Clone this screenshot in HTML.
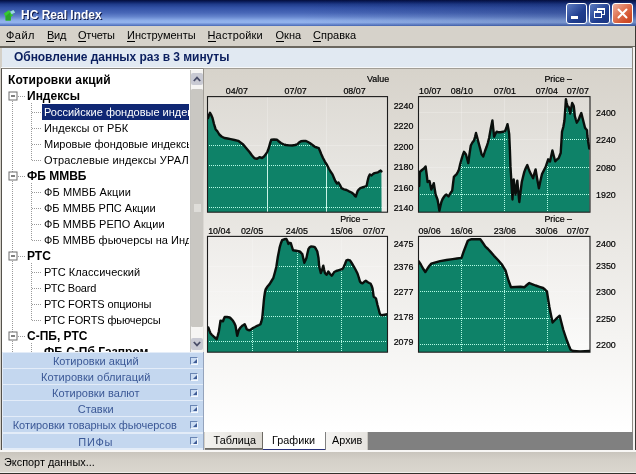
<!DOCTYPE html>
<html><head><meta charset="utf-8"><title>HC Real Index</title>
<style>
html,body{margin:0;padding:0}
body{will-change:transform;width:636px;height:474px;overflow:hidden;position:relative;background:#d4d0c8;font-family:"Liberation Sans",sans-serif;font-size:11px;color:#000}
div,span,i{position:absolute;box-sizing:border-box;white-space:nowrap}
.title{left:0;top:0;width:636px;height:26px;background:linear-gradient(180deg,#040e3c 0%,#0c1f60 7%,#1f3b8a 16%,#3352a6 30%,#4968b8 50%,#6686ce 65%,#8cace8 78%,#94b4ee 86%,#6a8ad0 94%,#4868b4 100%)}
.title .shade{left:300px;top:0;width:336px;height:26px;background:linear-gradient(90deg,rgba(8,20,70,0) 0%,rgba(8,20,70,.25) 100%)}
.title .t{left:21px;top:7.5px;font-size:12px;font-weight:bold;color:#fff;text-shadow:1px 1px 0 #0a1440;line-height:14px}
.menubar{left:0;top:26px;width:636px;height:21px;background:#d6d2ca}
.menubar span{top:3px;line-height:13px;font-size:11px;color:#000}
.menubar u{text-decoration:none;border-bottom:1px solid #000;padding-bottom:0}
.mline{left:0;top:46px;width:636px;height:2px;background:#6b675f}
.upd{left:2px;top:48px;width:631px;height:18.6px;background:#e1e9f2}
.updw{left:1px;top:66.6px;width:634px;height:1.6px;background:#f6f7f8}
.upd span{left:12px;top:2px;font-size:12px;font-weight:bold;color:#0a1e5e;line-height:14px;letter-spacing:-0.05px}
.leftp{left:1px;top:68.2px;width:202.5px;height:382px;background:#fff;border-left:1.6px solid #55524c;border-top:1.6px solid #86837d}
.tr{height:16px;line-height:16px;font-size:11px;color:#000}
.tr.b{font-weight:bold;font-size:12px}
.tr.sel{color:#fff}
.selbg{left:42px;width:147px;height:16px;background:#0f2773}
.treeclip{left:2px;top:70px;width:187px;height:282px;overflow:hidden;background:#fff}
.treeclip .in{left:-2px;top:-70px;width:190px;height:400px}
svg.tl{position:absolute;left:0px;top:70px}
.sb{left:189.6px;top:70px;width:13.4px;height:282px;background:#f6f5f3;border-left:1px solid #c4c3bf}
.sb .btn{left:0.8px;width:11.4px;height:12px;background:#c9cad3;border-radius:2px}
.sb .thumb{left:0.6px;top:19px;width:11.6px;height:237.5px;background:#c9c7c2;border-radius:1.5px}
.acc{left:3px;width:200px;height:14.6px;background:#c4d7ef}
.acc span{left:0;width:185.5px;letter-spacing:0.04px;text-align:center;top:1px;line-height:14.6px;font-size:11px;color:#3b5896}
.acc i{left:187px;top:3.5px;width:8px;height:8px;border:1px solid #f4f8fd;border-top-color:#6a86b4;border-left-color:#6a86b4;background:#cbdcf2}
.acc i:after{content:"";position:absolute;left:1.5px;top:1.5px;width:0;height:0;border-left:4.5px solid transparent;border-bottom:4.5px solid #3f5c96}
.accbg{left:2px;top:352px;width:202px;height:98px;background:#e3ecf8}
.split{left:203px;top:68.2px;width:1.2px;height:284px;background:linear-gradient(180deg,#96928b 0%,#a8a49e 12%,#d6d3ce 40%,#e8e6e2 100%)}
.split2{left:203px;top:352px;width:1px;height:98px;background:#94a3bc}
.panel{left:204.2px;top:68.2px;width:427.8px;height:364px;background:linear-gradient(180deg,#d7d3cb 0%,#ffffff 100%);border-top:1px solid #a29e96}
.tabs{left:205px;top:431.5px;width:428px;height:18.5px;background:#808080}
.tab{top:0;height:17.5px;background:linear-gradient(90deg,#f4f3f0,#dddad4);font-size:10.8px;line-height:16.5px;text-align:center;color:#000;border-right:1px solid #6d6a64;border-bottom:1px solid #6d6a64}
.tab.act{top:-2px;height:20px;background:#fff;line-height:21.5px;border-bottom:1.5px solid #27307a;border-right:none}
.redge{left:632px;top:47px;width:4px;height:405px;background:#f4f3f1;border-left:1px solid #8f8b84;border-right:1px solid #3a3834}
.redge2{left:635px;top:26px;width:1px;height:448px;background:#3a3834}
.status{left:0;top:450px;width:636px;height:24px;background:linear-gradient(180deg,#c9c5bd 0%,#d4d0c8 35%,#dbd7cf 100%);border-top:2px solid #f8f7f5;border-bottom:1.5px solid #33312c}
.status:after{content:"";position:absolute;left:0;right:0;bottom:0;height:1px;background:#f0efec}
.status span{left:4px;top:3.8px;font-size:10.9px;line-height:13px}
svg.charts{position:absolute;left:0;top:0}
.cb{top:3px;width:21px;height:21px;border:1px solid #fff;border-radius:3px}
</style></head><body>
<div class="title"><div class="shade"></div>
<svg style="position:absolute;left:3px;top:8.5px" width="13" height="12.5" viewBox="0 0 15 14" preserveAspectRatio="none"><path d="M1 5 L7 1 L8 3 L12 1 L14 4 L10 6 L12 7 L9 9 L9 13 L3 13 L3 9 Z" fill="#35c832"/><path d="M7 1 L8 3 L12 1 L14 4 L10 6" fill="#9fd0f0"/><path d="M3 8 L8 4 L9 9 L9 13 L3 13Z" fill="#2aa62a"/></svg>
<span class="t">HC Real Index</span>
<div class="cb" style="left:566px;background:linear-gradient(135deg,#5d7bc0,#1f3d8f 60%,#1a347f)"><div style="left:4px;top:12px;width:7px;height:3px;background:#fff"></div></div>
<div class="cb" style="left:589px;background:linear-gradient(135deg,#5d7bc0,#1f3d8f 60%,#1a347f)"><div style="left:7px;top:4px;width:8px;height:7px;border:1px solid #fff;border-top-width:2px"></div><div style="left:4px;top:7px;width:8px;height:7px;border:1px solid #fff;border-top-width:2px;background:#27449a"></div></div>
<div class="cb" style="left:612px;background:linear-gradient(135deg,#eeb0a0 0%,#e07858 40%,#d2502c 75%,#c84420 100%)"><svg style="position:absolute;left:4px;top:4px" width="11" height="11" viewBox="0 0 11 11"><path d="M1.5 1.5 L9.5 9.5 M9.5 1.5 L1.5 9.5" stroke="#fff" stroke-width="2" stroke-linecap="round"/></svg></div>
</div>
<div class="menubar">
<span style="left:6px;letter-spacing:0.45px"><u>Ф</u>айл</span>
<span style="left:47px;letter-spacing:-0.3px"><u>В</u>ид</span>
<span style="left:78px;letter-spacing:-0.2px"><u>О</u>тчеты</span>
<span style="left:127px"><u>И</u>нструменты</span>
<span style="left:207.5px;letter-spacing:0.15px"><u>Н</u>астройки</span>
<span style="left:275.5px"><u>О</u>кна</span>
<span style="left:313px"><u>С</u>правка</span>
</div>
<div class="mline"></div>
<div class="upd"><span>Обновление данных раз в 3 минуты</span></div>
<div class="updw"></div><div class="redge"></div><div class="redge2"></div>
<div class="leftp"></div>
<div class="treeclip"><div class="in">
<div class="tr b" style="top:72px;left:8px;letter-spacing:0.1px">Котировки акций</div>
<div class="tr b" style="top:88px;left:27px">Индексы</div>
<div class="selbg" style="top:104px"></div>
<div class="tr sel" style="top:104px;left:44px">Российские фондовые индексы</div>
<div class="tr" style="top:120px;left:44px;letter-spacing:0.1px">Индексы от РБК</div>
<div class="tr" style="top:136px;left:44px">Мировые фондовые индексы</div>
<div class="tr" style="top:152px;left:44px;letter-spacing:0.15px">Отраслевые индексы УРАЛСИБ</div>
<div class="tr b" style="top:168px;left:27px">ФБ ММВБ</div>
<div class="tr" style="top:184px;left:44px;letter-spacing:0.13px">ФБ ММВБ Акции</div>
<div class="tr" style="top:200px;left:44px">ФБ ММВБ РПС Акции</div>
<div class="tr" style="top:216px;left:44px;letter-spacing:0.06px">ФБ ММВБ РЕПО Акции</div>
<div class="tr" style="top:232px;left:44px">ФБ ММВБ фьючерсы на Индексы</div>
<div class="tr b" style="top:248px;left:27px">РТС</div>
<div class="tr" style="top:264px;left:44px;letter-spacing:0.07px">РТС Классический</div>
<div class="tr" style="top:280px;left:44px;letter-spacing:-0.2px">РТС Board</div>
<div class="tr" style="top:296px;left:44px;letter-spacing:-0.12px">РТС FORTS опционы</div>
<div class="tr" style="top:312px;left:44px;letter-spacing:-0.13px">РТС FORTS фьючерсы</div>
<div class="tr b" style="top:328px;left:27px">С-ПБ, РТС</div>
<div class="tr b" style="top:344px;left:44px">ФБ С-Пб Газпром</div>
</div></div>
<svg class="tl" width="190" height="282" viewBox="0 70 190 282"><g stroke="#9a9a9a" stroke-width="1" stroke-dasharray="1 1" shape-rendering="crispEdges"><line x1="12.5" x2="12.5" y1="101" y2="352"/><line x1="18" x2="26" y1="96.5" y2="96.5"/><line x1="32" x2="42" y1="112.5" y2="112.5"/><line x1="32" x2="42" y1="128.5" y2="128.5"/><line x1="32" x2="42" y1="144.5" y2="144.5"/><line x1="32" x2="42" y1="160.5" y2="160.5"/><line x1="18" x2="26" y1="176.5" y2="176.5"/><line x1="32" x2="42" y1="192.5" y2="192.5"/><line x1="32" x2="42" y1="208.5" y2="208.5"/><line x1="32" x2="42" y1="224.5" y2="224.5"/><line x1="32" x2="42" y1="240.5" y2="240.5"/><line x1="18" x2="26" y1="256.5" y2="256.5"/><line x1="32" x2="42" y1="272.5" y2="272.5"/><line x1="32" x2="42" y1="288.5" y2="288.5"/><line x1="32" x2="42" y1="304.5" y2="304.5"/><line x1="32" x2="42" y1="320.5" y2="320.5"/><line x1="18" x2="26" y1="336.5" y2="336.5"/><line x1="32" x2="42" y1="352.5" y2="352.5"/><line x1="31.5" x2="31.5" y1="103" y2="160.5"/><line x1="31.5" x2="31.5" y1="183" y2="240.5"/><line x1="31.5" x2="31.5" y1="263" y2="320.5"/><line x1="31.5" x2="31.5" y1="343" y2="352.5"/></g><rect x="9" y="92.0" width="8" height="8" fill="#fff" stroke="#6e6e6e"/><line x1="11" x2="15" y1="96.0" y2="96.0" stroke="#000"/><rect x="9" y="172.0" width="8" height="8" fill="#fff" stroke="#6e6e6e"/><line x1="11" x2="15" y1="176.0" y2="176.0" stroke="#000"/><rect x="9" y="252.0" width="8" height="8" fill="#fff" stroke="#6e6e6e"/><line x1="11" x2="15" y1="256.0" y2="256.0" stroke="#000"/><rect x="9" y="332.0" width="8" height="8" fill="#fff" stroke="#6e6e6e"/><line x1="11" x2="15" y1="336.0" y2="336.0" stroke="#000"/></svg>
<div class="sb"><div class="btn" style="top:3px"><svg style="position:absolute;left:2px;top:3px" width="8" height="6" viewBox="0 0 8 6"><path d="M0.8 5 L4 1.6 L7.2 5" fill="none" stroke="#4a4e68" stroke-width="1.8"/></svg></div><div class="thumb"><svg style="position:absolute;left:2.5px;top:114.5px" width="7" height="8" viewBox="0 0 7 8"><path d="M0 1h7M0 3h7M0 5h7M0 7h7" stroke="#f4f3f0" stroke-width="1"/></svg></div><div class="btn" style="top:267.5px"><svg style="position:absolute;left:2px;top:3px" width="8" height="6" viewBox="0 0 8 6"><path d="M0.8 1 L4 4.4 L7.2 1" fill="none" stroke="#4a4e68" stroke-width="1.8"/></svg></div></div>
<div class="accbg"></div>
<div class="acc" style="top:353.0px"><span>Котировки акций</span><i></i></div>
<div class="acc" style="top:369.1px"><span>Котировки облигаций</span><i></i></div>
<div class="acc" style="top:385.2px"><span>Котировки валют</span><i></i></div>
<div class="acc" style="top:401.3px"><span>Ставки</span><i></i></div>
<div class="acc" style="top:417.4px"><span style="letter-spacing:-0.05px;left:-1px">Котировки товарных фьючерсов</span><i></i></div>
<div class="acc" style="top:433.5px"><span style="letter-spacing:0.7px">ПИФы</span><i></i></div>
<div class="split"></div><div class="split2"></div>
<div class="panel"></div>
<div class="tabs">
<div class="tab" style="left:0px;width:57.5px;padding-left:3px">Таблица</div>
<div class="tab act" style="left:57.5px;width:62px">Графики</div>
<div class="tab" style="left:120.5px;width:42.5px;padding-left:2px;background:linear-gradient(90deg,#f4f3f1,#e6e4e0);border-right:1px solid #c8c6c0;border-bottom:none;top:0.5px">Архив</div>
</div>
<div class="status"><span>Экспорт данных...</span></div>
<svg class="charts" width="636" height="474" viewBox="0 0 636 474">
<defs><linearGradient id="g1" x1="0" y1="0" x2="0" y2="1"><stop offset="0" stop-color="#dedbd5"/><stop offset="1" stop-color="#ecebe8"/></linearGradient><clipPath id="cp1"><rect x="207.5" y="96.6" width="180.0" height="115.6"/></clipPath></defs>
<rect x="207.5" y="96.6" width="180.0" height="115.6" fill="url(#g1)"/>
<line x1="207.5" x2="387.5" y1="145.5" y2="145.5" stroke="#ffffff" stroke-opacity="0.22" stroke-width="1"/>
<line x1="207.5" x2="387.5" y1="165.5" y2="165.5" stroke="#ffffff" stroke-opacity="0.22" stroke-width="1"/>
<line x1="207.5" x2="387.5" y1="187.5" y2="187.5" stroke="#ffffff" stroke-opacity="0.22" stroke-width="1"/>
<line x1="207.5" x2="387.5" y1="207.5" y2="207.5" stroke="#ffffff" stroke-opacity="0.22" stroke-width="1"/>
<line x1="267.5" x2="267.5" y1="96.6" y2="212.2" stroke="#ffffff" stroke-opacity="0.22" stroke-width="1"/>
<line x1="326.5" x2="326.5" y1="96.6" y2="212.2" stroke="#ffffff" stroke-opacity="0.22" stroke-width="1"/>
<g clip-path="url(#cp1)">
<polygon points="208.0,118.0 209.0,115.0 210.0,112.8 211.0,114.5 212.5,118.0 214.0,124.0 215.6,129.2 217.5,131.5 219.3,134.5 221.5,136.5 224.4,138.0 227.5,138.5 230.6,139.2 234.5,140.0 238.2,140.8 240.5,142.5 243.2,144.5 246.5,148.5 249.5,152.0 252.0,155.5 254.5,158.3 257.0,158.8 259.5,157.2 262.0,158.0 264.0,156.5 265.8,154.3 267.5,151.5 268.8,148.0 270.0,143.5 271.3,139.7 274.0,139.5 277.1,139.8 279.0,141.5 280.9,143.0 283.5,144.3 285.9,145.0 289.0,145.4 292.2,145.5 295.0,145.0 297.2,144.3 299.0,142.5 301.0,141.2 303.5,141.0 306.0,141.0 308.0,142.0 309.8,143.0 312.5,145.0 314.8,146.8 317.0,147.5 318.8,148.2 320.0,151.0 321.3,154.3 323.0,158.0 325.0,161.8 327.0,165.0 328.8,168.5 330.5,171.5 332.5,174.4 334.0,178.0 335.3,181.0 337.0,183.5 338.5,182.5 340.0,185.0 341.5,188.2 344.0,189.3 346.5,190.0 349.0,191.3 351.5,192.5 353.5,194.0 355.0,196.0 355.8,196.6 356.8,193.5 357.8,190.7 359.0,189.3 360.3,188.2 362.0,187.5 364.0,187.0 366.6,185.7 367.6,181.0 368.6,177.0 369.8,174.4 371.5,175.5 373.0,174.0 374.5,173.1 377.9,172.4 379.5,171.2 380.6,170.6 381.4,171.4 381.6,212.2 207.4,212.2 207.4,118.0" fill="#0e8268"/>
<clipPath id="fp1"><polygon points="208.0,118.0 209.0,115.0 210.0,112.8 211.0,114.5 212.5,118.0 214.0,124.0 215.6,129.2 217.5,131.5 219.3,134.5 221.5,136.5 224.4,138.0 227.5,138.5 230.6,139.2 234.5,140.0 238.2,140.8 240.5,142.5 243.2,144.5 246.5,148.5 249.5,152.0 252.0,155.5 254.5,158.3 257.0,158.8 259.5,157.2 262.0,158.0 264.0,156.5 265.8,154.3 267.5,151.5 268.8,148.0 270.0,143.5 271.3,139.7 274.0,139.5 277.1,139.8 279.0,141.5 280.9,143.0 283.5,144.3 285.9,145.0 289.0,145.4 292.2,145.5 295.0,145.0 297.2,144.3 299.0,142.5 301.0,141.2 303.5,141.0 306.0,141.0 308.0,142.0 309.8,143.0 312.5,145.0 314.8,146.8 317.0,147.5 318.8,148.2 320.0,151.0 321.3,154.3 323.0,158.0 325.0,161.8 327.0,165.0 328.8,168.5 330.5,171.5 332.5,174.4 334.0,178.0 335.3,181.0 337.0,183.5 338.5,182.5 340.0,185.0 341.5,188.2 344.0,189.3 346.5,190.0 349.0,191.3 351.5,192.5 353.5,194.0 355.0,196.0 355.8,196.6 356.8,193.5 357.8,190.7 359.0,189.3 360.3,188.2 362.0,187.5 364.0,187.0 366.6,185.7 367.6,181.0 368.6,177.0 369.8,174.4 371.5,175.5 373.0,174.0 374.5,173.1 377.9,172.4 379.5,171.2 380.6,170.6 381.4,171.4 381.6,212.2 207.4,212.2 207.4,118.0"/></clipPath>
<g clip-path="url(#fp1)" stroke="#b4fbe6" stroke-width="1" stroke-dasharray="1 1" shape-rendering="crispEdges">
<line x1="207" x2="387.5" y1="145.5" y2="145.5"/>
<line x1="207" x2="387.5" y1="165.5" y2="165.5"/>
<line x1="207" x2="387.5" y1="187.5" y2="187.5"/>
<line x1="207" x2="387.5" y1="207.5" y2="207.5"/>
<line x1="267.5" x2="267.5" y1="96.6" y2="212.2" stroke-dasharray="none" stroke="#c9f3e6"/>
<line x1="326.5" x2="326.5" y1="96.6" y2="212.2" stroke-dasharray="none" stroke="#c9f3e6"/>
</g>
<polyline points="208.0,118.0 209.0,115.0 210.0,112.8 211.0,114.5 212.5,118.0 214.0,124.0 215.6,129.2 217.5,131.5 219.3,134.5 221.5,136.5 224.4,138.0 227.5,138.5 230.6,139.2 234.5,140.0 238.2,140.8 240.5,142.5 243.2,144.5 246.5,148.5 249.5,152.0 252.0,155.5 254.5,158.3 257.0,158.8 259.5,157.2 262.0,158.0 264.0,156.5 265.8,154.3 267.5,151.5 268.8,148.0 270.0,143.5 271.3,139.7 274.0,139.5 277.1,139.8 279.0,141.5 280.9,143.0 283.5,144.3 285.9,145.0 289.0,145.4 292.2,145.5 295.0,145.0 297.2,144.3 299.0,142.5 301.0,141.2 303.5,141.0 306.0,141.0 308.0,142.0 309.8,143.0 312.5,145.0 314.8,146.8 317.0,147.5 318.8,148.2 320.0,151.0 321.3,154.3 323.0,158.0 325.0,161.8 327.0,165.0 328.8,168.5 330.5,171.5 332.5,174.4 334.0,178.0 335.3,181.0 337.0,183.5 338.5,182.5 340.0,185.0 341.5,188.2 344.0,189.3 346.5,190.0 349.0,191.3 351.5,192.5 353.5,194.0 355.0,196.0 355.8,196.6 356.8,193.5 357.8,190.7 359.0,189.3 360.3,188.2 362.0,187.5 364.0,187.0 366.6,185.7 367.6,181.0 368.6,177.0 369.8,174.4 371.5,175.5 373.0,174.0 374.5,173.1 377.9,172.4 379.5,171.2 380.6,170.6 381.4,171.4" fill="none" stroke="#0a0f0c" stroke-width="2.4" stroke-linejoin="round" stroke-linecap="round"/>
</g>
<rect x="207.5" y="96.6" width="180.0" height="115.6" fill="none" stroke="#1c1c1c" stroke-width="1.1"/>
<defs><linearGradient id="g2" x1="0" y1="0" x2="0" y2="1"><stop offset="0" stop-color="#dedbd5"/><stop offset="1" stop-color="#ecebe8"/></linearGradient><clipPath id="cp2"><rect x="418.5" y="96.6" width="171.5" height="115.6"/></clipPath></defs>
<rect x="418.5" y="96.6" width="171.5" height="115.6" fill="url(#g2)"/>
<line x1="418.5" x2="590" y1="112.5" y2="112.5" stroke="#ffffff" stroke-opacity="0.22" stroke-width="1"/>
<line x1="418.5" x2="590" y1="139.5" y2="139.5" stroke="#ffffff" stroke-opacity="0.22" stroke-width="1"/>
<line x1="418.5" x2="590" y1="167.5" y2="167.5" stroke="#ffffff" stroke-opacity="0.22" stroke-width="1"/>
<line x1="418.5" x2="590" y1="194.5" y2="194.5" stroke="#ffffff" stroke-opacity="0.22" stroke-width="1"/>
<line x1="461.5" x2="461.5" y1="96.6" y2="212.2" stroke="#ffffff" stroke-opacity="0.22" stroke-width="1"/>
<line x1="504.5" x2="504.5" y1="96.6" y2="212.2" stroke="#ffffff" stroke-opacity="0.22" stroke-width="1"/>
<line x1="547.5" x2="547.5" y1="96.6" y2="212.2" stroke="#ffffff" stroke-opacity="0.22" stroke-width="1"/>
<g clip-path="url(#cp2)">
<polygon points="419.2,186.0 419.8,172.0 422.0,170.0 424.0,168.5 425.6,166.4 426.6,174.0 427.6,182.0 429.5,181.0 431.3,189.5 432.6,186.5 433.8,183.2 434.7,189.0 435.6,194.5 437.5,199.5 438.5,205.0 439.4,210.8 440.4,206.0 441.4,202.0 442.6,199.0 443.9,197.0 445.0,195.5 446.4,194.5 448.5,196.5 450.5,193.0 452.2,190.7 453.0,184.0 453.9,176.9 455.2,175.5 456.5,174.4 457.8,172.0 459.0,169.4 460.2,164.0 461.5,159.3 462.8,155.0 464.0,151.8 466.0,154.5 467.2,159.0 468.3,163.1 469.5,154.0 470.8,145.5 472.4,142.5 474.0,140.5 475.0,137.0 476.0,133.0 477.2,137.5 478.3,141.7 480.0,148.0 481.6,154.3 483.3,156.5 485.0,151.0 486.6,146.8 487.8,143.0 489.1,138.0 490.7,129.0 492.4,120.4 493.3,129.0 494.1,136.7 495.4,134.0 496.7,131.7 498.5,132.3 500.4,132.2 503.0,131.8 505.0,131.2 506.3,128.0 507.5,124.2 508.4,129.0 509.2,134.2 509.9,150.0 510.5,166.9 511.5,184.0 512.5,199.5 513.1,189.0 513.7,179.4 514.6,187.0 515.5,194.5 516.4,188.0 517.3,180.7 518.3,192.0 519.3,202.0 520.5,192.0 521.8,182.0 523.0,177.0 524.3,171.9 525.8,168.0 527.3,165.1 528.5,168.5 529.8,171.9 531.4,175.0 533.1,178.2 534.3,173.5 535.6,169.4 537.2,179.0 538.9,188.2 540.4,181.0 541.9,174.4 543.8,170.5 545.7,166.9 547.0,163.0 548.2,159.3 550.0,161.5 551.2,156.0 552.4,150.5 553.8,156.0 555.2,161.3 557.0,159.5 558.7,158.1 559.7,155.5 560.7,153.0 561.4,142.0 562.0,131.7 563.3,127.0 564.4,121.0 565.2,110.0 565.9,99.3 566.7,103.0 567.5,106.3 568.6,106.8 569.4,110.0 570.1,113.5 571.2,108.0 572.2,103.0 573.0,104.5 573.8,106.3 574.3,111.0 574.8,116.0 575.8,119.5 576.8,122.7 577.8,121.0 578.8,119.3 580.0,116.0 581.3,113.0 582.3,117.0 583.3,121.0 584.2,124.5 585.0,127.7 586.0,129.0 587.0,130.2 587.4,136.0 588.2,142.0 589.3,148.5 589.6,212.2 418.6,212.2 418.6,186.0" fill="#0e8268"/>
<clipPath id="fp2"><polygon points="419.2,186.0 419.8,172.0 422.0,170.0 424.0,168.5 425.6,166.4 426.6,174.0 427.6,182.0 429.5,181.0 431.3,189.5 432.6,186.5 433.8,183.2 434.7,189.0 435.6,194.5 437.5,199.5 438.5,205.0 439.4,210.8 440.4,206.0 441.4,202.0 442.6,199.0 443.9,197.0 445.0,195.5 446.4,194.5 448.5,196.5 450.5,193.0 452.2,190.7 453.0,184.0 453.9,176.9 455.2,175.5 456.5,174.4 457.8,172.0 459.0,169.4 460.2,164.0 461.5,159.3 462.8,155.0 464.0,151.8 466.0,154.5 467.2,159.0 468.3,163.1 469.5,154.0 470.8,145.5 472.4,142.5 474.0,140.5 475.0,137.0 476.0,133.0 477.2,137.5 478.3,141.7 480.0,148.0 481.6,154.3 483.3,156.5 485.0,151.0 486.6,146.8 487.8,143.0 489.1,138.0 490.7,129.0 492.4,120.4 493.3,129.0 494.1,136.7 495.4,134.0 496.7,131.7 498.5,132.3 500.4,132.2 503.0,131.8 505.0,131.2 506.3,128.0 507.5,124.2 508.4,129.0 509.2,134.2 509.9,150.0 510.5,166.9 511.5,184.0 512.5,199.5 513.1,189.0 513.7,179.4 514.6,187.0 515.5,194.5 516.4,188.0 517.3,180.7 518.3,192.0 519.3,202.0 520.5,192.0 521.8,182.0 523.0,177.0 524.3,171.9 525.8,168.0 527.3,165.1 528.5,168.5 529.8,171.9 531.4,175.0 533.1,178.2 534.3,173.5 535.6,169.4 537.2,179.0 538.9,188.2 540.4,181.0 541.9,174.4 543.8,170.5 545.7,166.9 547.0,163.0 548.2,159.3 550.0,161.5 551.2,156.0 552.4,150.5 553.8,156.0 555.2,161.3 557.0,159.5 558.7,158.1 559.7,155.5 560.7,153.0 561.4,142.0 562.0,131.7 563.3,127.0 564.4,121.0 565.2,110.0 565.9,99.3 566.7,103.0 567.5,106.3 568.6,106.8 569.4,110.0 570.1,113.5 571.2,108.0 572.2,103.0 573.0,104.5 573.8,106.3 574.3,111.0 574.8,116.0 575.8,119.5 576.8,122.7 577.8,121.0 578.8,119.3 580.0,116.0 581.3,113.0 582.3,117.0 583.3,121.0 584.2,124.5 585.0,127.7 586.0,129.0 587.0,130.2 587.4,136.0 588.2,142.0 589.3,148.5 589.6,212.2 418.6,212.2 418.6,186.0"/></clipPath>
<g clip-path="url(#fp2)" stroke="#b4fbe6" stroke-width="1" stroke-dasharray="1 1" shape-rendering="crispEdges">
<line x1="418" x2="590" y1="112.5" y2="112.5"/>
<line x1="418" x2="590" y1="139.5" y2="139.5"/>
<line x1="418" x2="590" y1="167.5" y2="167.5"/>
<line x1="418" x2="590" y1="194.5" y2="194.5"/>
<line x1="461.5" x2="461.5" y1="96" y2="212.2"/>
<line x1="504.5" x2="504.5" y1="96" y2="212.2"/>
<line x1="547.5" x2="547.5" y1="96" y2="212.2"/>
</g>
<polyline points="419.2,186.0 419.8,172.0 422.0,170.0 424.0,168.5 425.6,166.4 426.6,174.0 427.6,182.0 429.5,181.0 431.3,189.5 432.6,186.5 433.8,183.2 434.7,189.0 435.6,194.5 437.5,199.5 438.5,205.0 439.4,210.8 440.4,206.0 441.4,202.0 442.6,199.0 443.9,197.0 445.0,195.5 446.4,194.5 448.5,196.5 450.5,193.0 452.2,190.7 453.0,184.0 453.9,176.9 455.2,175.5 456.5,174.4 457.8,172.0 459.0,169.4 460.2,164.0 461.5,159.3 462.8,155.0 464.0,151.8 466.0,154.5 467.2,159.0 468.3,163.1 469.5,154.0 470.8,145.5 472.4,142.5 474.0,140.5 475.0,137.0 476.0,133.0 477.2,137.5 478.3,141.7 480.0,148.0 481.6,154.3 483.3,156.5 485.0,151.0 486.6,146.8 487.8,143.0 489.1,138.0 490.7,129.0 492.4,120.4 493.3,129.0 494.1,136.7 495.4,134.0 496.7,131.7 498.5,132.3 500.4,132.2 503.0,131.8 505.0,131.2 506.3,128.0 507.5,124.2 508.4,129.0 509.2,134.2 509.9,150.0 510.5,166.9 511.5,184.0 512.5,199.5 513.1,189.0 513.7,179.4 514.6,187.0 515.5,194.5 516.4,188.0 517.3,180.7 518.3,192.0 519.3,202.0 520.5,192.0 521.8,182.0 523.0,177.0 524.3,171.9 525.8,168.0 527.3,165.1 528.5,168.5 529.8,171.9 531.4,175.0 533.1,178.2 534.3,173.5 535.6,169.4 537.2,179.0 538.9,188.2 540.4,181.0 541.9,174.4 543.8,170.5 545.7,166.9 547.0,163.0 548.2,159.3 550.0,161.5 551.2,156.0 552.4,150.5 553.8,156.0 555.2,161.3 557.0,159.5 558.7,158.1 559.7,155.5 560.7,153.0 561.4,142.0 562.0,131.7 563.3,127.0 564.4,121.0 565.2,110.0 565.9,99.3 566.7,103.0 567.5,106.3 568.6,106.8 569.4,110.0 570.1,113.5 571.2,108.0 572.2,103.0 573.0,104.5 573.8,106.3 574.3,111.0 574.8,116.0 575.8,119.5 576.8,122.7 577.8,121.0 578.8,119.3 580.0,116.0 581.3,113.0 582.3,117.0 583.3,121.0 584.2,124.5 585.0,127.7 586.0,129.0 587.0,130.2 587.4,136.0 588.2,142.0 589.3,148.5" fill="none" stroke="#0a0f0c" stroke-width="2.4" stroke-linejoin="round" stroke-linecap="round"/>
</g>
<rect x="418.5" y="96.6" width="171.5" height="115.6" fill="none" stroke="#1c1c1c" stroke-width="1.1"/>
<defs><linearGradient id="g3" x1="0" y1="0" x2="0" y2="1"><stop offset="0" stop-color="#eeece9"/><stop offset="1" stop-color="#fbfbfa"/></linearGradient><clipPath id="cp3"><rect x="207.5" y="236.4" width="180.0" height="115.79999999999998"/></clipPath></defs>
<rect x="207.5" y="236.4" width="180.0" height="115.79999999999998" fill="url(#g3)"/>
<line x1="207.5" x2="387.5" y1="266.5" y2="266.5" stroke="#ffffff" stroke-opacity="0.22" stroke-width="1"/>
<line x1="207.5" x2="387.5" y1="291.5" y2="291.5" stroke="#ffffff" stroke-opacity="0.22" stroke-width="1"/>
<line x1="207.5" x2="387.5" y1="316.5" y2="316.5" stroke="#ffffff" stroke-opacity="0.22" stroke-width="1"/>
<line x1="207.5" x2="387.5" y1="341.5" y2="341.5" stroke="#ffffff" stroke-opacity="0.22" stroke-width="1"/>
<line x1="252.5" x2="252.5" y1="236.4" y2="352.2" stroke="#ffffff" stroke-opacity="0.22" stroke-width="1"/>
<line x1="297.5" x2="297.5" y1="236.4" y2="352.2" stroke="#ffffff" stroke-opacity="0.22" stroke-width="1"/>
<line x1="341.5" x2="341.5" y1="236.4" y2="352.2" stroke="#ffffff" stroke-opacity="0.22" stroke-width="1"/>
<g clip-path="url(#cp3)">
<polygon points="208.3,327.5 209.4,330.5 210.5,333.3 212.0,335.0 213.8,336.7 215.3,338.0 216.7,339.2 217.8,335.5 218.8,331.7 219.7,326.0 220.5,320.8 221.8,321.0 223.0,321.3 223.8,319.0 224.7,317.0 227.0,317.0 229.7,317.5 231.4,319.0 233.0,320.8 234.3,323.0 235.5,325.8 236.4,331.0 237.2,335.8 238.0,333.0 238.8,330.0 240.5,327.5 242.2,325.8 243.5,325.0 244.7,324.2 245.7,326.5 246.7,329.2 248.2,330.0 249.7,330.3 251.3,329.2 253.0,328.0 255.0,327.0 257.2,325.8 259.0,325.0 260.5,324.2 261.4,321.5 262.2,318.3 262.8,312.0 263.3,306.7 263.8,301.0 264.3,296.7 265.0,292.0 265.6,289.5 267.5,286.5 269.6,284.1 271.5,281.0 273.4,277.8 275.0,272.0 276.4,266.5 277.2,261.0 277.9,256.5 278.8,252.0 279.6,247.7 280.8,243.5 282.1,240.2 284.2,239.3 286.4,238.9 287.4,241.0 288.4,243.9 289.6,242.8 290.8,243.2 292.0,247.0 293.0,250.2 296.0,250.8 299.7,251.5 301.3,253.0 302.3,254.0 303.3,258.5 304.3,262.8 305.4,260.5 306.5,257.7 307.5,253.0 308.5,248.9 309.7,247.3 311.0,246.4 313.0,246.6 314.8,247.2 316.0,249.0 317.3,251.5 318.5,258.0 319.2,266.5 320.8,273.0 322.0,270.0 323.3,265.7 324.2,270.0 325.0,273.2 326.7,274.8 328.3,271.5 330.0,274.0 331.7,275.7 333.0,274.0 334.2,272.0 336.2,271.0 338.3,270.3 340.5,269.6 342.5,269.0 343.7,267.0 345.0,264.0 346.4,260.3 348.0,259.8 350.0,260.3 352.0,263.5 353.8,266.5 355.6,269.8 357.5,273.5 358.8,277.5 360.0,281.6 361.2,282.8 362.5,283.3 364.2,281.8 365.8,280.8 367.5,282.0 369.2,283.0 370.5,283.5 371.7,286.0 372.5,288.3 373.1,292.5 373.7,296.7 375.0,297.5 376.0,298.5 376.8,302.0 377.5,305.0 378.6,309.0 379.7,313.3 380.7,314.8 381.7,315.3 384.5,314.8 387.3,314.3 387.5,352.2 207.7,352.2 207.7,327.5" fill="#0e8268"/>
<clipPath id="fp3"><polygon points="208.3,327.5 209.4,330.5 210.5,333.3 212.0,335.0 213.8,336.7 215.3,338.0 216.7,339.2 217.8,335.5 218.8,331.7 219.7,326.0 220.5,320.8 221.8,321.0 223.0,321.3 223.8,319.0 224.7,317.0 227.0,317.0 229.7,317.5 231.4,319.0 233.0,320.8 234.3,323.0 235.5,325.8 236.4,331.0 237.2,335.8 238.0,333.0 238.8,330.0 240.5,327.5 242.2,325.8 243.5,325.0 244.7,324.2 245.7,326.5 246.7,329.2 248.2,330.0 249.7,330.3 251.3,329.2 253.0,328.0 255.0,327.0 257.2,325.8 259.0,325.0 260.5,324.2 261.4,321.5 262.2,318.3 262.8,312.0 263.3,306.7 263.8,301.0 264.3,296.7 265.0,292.0 265.6,289.5 267.5,286.5 269.6,284.1 271.5,281.0 273.4,277.8 275.0,272.0 276.4,266.5 277.2,261.0 277.9,256.5 278.8,252.0 279.6,247.7 280.8,243.5 282.1,240.2 284.2,239.3 286.4,238.9 287.4,241.0 288.4,243.9 289.6,242.8 290.8,243.2 292.0,247.0 293.0,250.2 296.0,250.8 299.7,251.5 301.3,253.0 302.3,254.0 303.3,258.5 304.3,262.8 305.4,260.5 306.5,257.7 307.5,253.0 308.5,248.9 309.7,247.3 311.0,246.4 313.0,246.6 314.8,247.2 316.0,249.0 317.3,251.5 318.5,258.0 319.2,266.5 320.8,273.0 322.0,270.0 323.3,265.7 324.2,270.0 325.0,273.2 326.7,274.8 328.3,271.5 330.0,274.0 331.7,275.7 333.0,274.0 334.2,272.0 336.2,271.0 338.3,270.3 340.5,269.6 342.5,269.0 343.7,267.0 345.0,264.0 346.4,260.3 348.0,259.8 350.0,260.3 352.0,263.5 353.8,266.5 355.6,269.8 357.5,273.5 358.8,277.5 360.0,281.6 361.2,282.8 362.5,283.3 364.2,281.8 365.8,280.8 367.5,282.0 369.2,283.0 370.5,283.5 371.7,286.0 372.5,288.3 373.1,292.5 373.7,296.7 375.0,297.5 376.0,298.5 376.8,302.0 377.5,305.0 378.6,309.0 379.7,313.3 380.7,314.8 381.7,315.3 384.5,314.8 387.3,314.3 387.5,352.2 207.7,352.2 207.7,327.5"/></clipPath>
<g clip-path="url(#fp3)" stroke="#b4fbe6" stroke-width="1" stroke-dasharray="1 1" shape-rendering="crispEdges">
<line x1="207" x2="387.5" y1="266.5" y2="266.5"/>
<line x1="207" x2="387.5" y1="291.5" y2="291.5"/>
<line x1="207" x2="387.5" y1="316.5" y2="316.5"/>
<line x1="207" x2="387.5" y1="341.5" y2="341.5"/>
<line x1="252.5" x2="252.5" y1="236" y2="352.2"/>
<line x1="297.5" x2="297.5" y1="236" y2="352.2"/>
<line x1="341.5" x2="341.5" y1="236" y2="352.2"/>
</g>
<polyline points="208.3,327.5 209.4,330.5 210.5,333.3 212.0,335.0 213.8,336.7 215.3,338.0 216.7,339.2 217.8,335.5 218.8,331.7 219.7,326.0 220.5,320.8 221.8,321.0 223.0,321.3 223.8,319.0 224.7,317.0 227.0,317.0 229.7,317.5 231.4,319.0 233.0,320.8 234.3,323.0 235.5,325.8 236.4,331.0 237.2,335.8 238.0,333.0 238.8,330.0 240.5,327.5 242.2,325.8 243.5,325.0 244.7,324.2 245.7,326.5 246.7,329.2 248.2,330.0 249.7,330.3 251.3,329.2 253.0,328.0 255.0,327.0 257.2,325.8 259.0,325.0 260.5,324.2 261.4,321.5 262.2,318.3 262.8,312.0 263.3,306.7 263.8,301.0 264.3,296.7 265.0,292.0 265.6,289.5 267.5,286.5 269.6,284.1 271.5,281.0 273.4,277.8 275.0,272.0 276.4,266.5 277.2,261.0 277.9,256.5 278.8,252.0 279.6,247.7 280.8,243.5 282.1,240.2 284.2,239.3 286.4,238.9 287.4,241.0 288.4,243.9 289.6,242.8 290.8,243.2 292.0,247.0 293.0,250.2 296.0,250.8 299.7,251.5 301.3,253.0 302.3,254.0 303.3,258.5 304.3,262.8 305.4,260.5 306.5,257.7 307.5,253.0 308.5,248.9 309.7,247.3 311.0,246.4 313.0,246.6 314.8,247.2 316.0,249.0 317.3,251.5 318.5,258.0 319.2,266.5 320.8,273.0 322.0,270.0 323.3,265.7 324.2,270.0 325.0,273.2 326.7,274.8 328.3,271.5 330.0,274.0 331.7,275.7 333.0,274.0 334.2,272.0 336.2,271.0 338.3,270.3 340.5,269.6 342.5,269.0 343.7,267.0 345.0,264.0 346.4,260.3 348.0,259.8 350.0,260.3 352.0,263.5 353.8,266.5 355.6,269.8 357.5,273.5 358.8,277.5 360.0,281.6 361.2,282.8 362.5,283.3 364.2,281.8 365.8,280.8 367.5,282.0 369.2,283.0 370.5,283.5 371.7,286.0 372.5,288.3 373.1,292.5 373.7,296.7 375.0,297.5 376.0,298.5 376.8,302.0 377.5,305.0 378.6,309.0 379.7,313.3 380.7,314.8 381.7,315.3 384.5,314.8 387.3,314.3" fill="none" stroke="#0a0f0c" stroke-width="2.4" stroke-linejoin="round" stroke-linecap="round"/>
</g>
<rect x="207.5" y="236.4" width="180.0" height="115.79999999999998" fill="none" stroke="#1c1c1c" stroke-width="1.1"/>
<defs><linearGradient id="g4" x1="0" y1="0" x2="0" y2="1"><stop offset="0" stop-color="#eeece9"/><stop offset="1" stop-color="#fbfbfa"/></linearGradient><clipPath id="cp4"><rect x="418.5" y="236.4" width="171.5" height="115.79999999999998"/></clipPath></defs>
<rect x="418.5" y="236.4" width="171.5" height="115.79999999999998" fill="url(#g4)"/>
<line x1="418.5" x2="590" y1="265.5" y2="265.5" stroke="#ffffff" stroke-opacity="0.22" stroke-width="1"/>
<line x1="418.5" x2="590" y1="291.5" y2="291.5" stroke="#ffffff" stroke-opacity="0.22" stroke-width="1"/>
<line x1="418.5" x2="590" y1="318.5" y2="318.5" stroke="#ffffff" stroke-opacity="0.22" stroke-width="1"/>
<line x1="418.5" x2="590" y1="344.5" y2="344.5" stroke="#ffffff" stroke-opacity="0.22" stroke-width="1"/>
<line x1="461.5" x2="461.5" y1="236.4" y2="352.2" stroke="#ffffff" stroke-opacity="0.22" stroke-width="1"/>
<line x1="504.5" x2="504.5" y1="236.4" y2="352.2" stroke="#ffffff" stroke-opacity="0.22" stroke-width="1"/>
<line x1="547.5" x2="547.5" y1="236.4" y2="352.2" stroke="#ffffff" stroke-opacity="0.22" stroke-width="1"/>
<g clip-path="url(#cp4)">
<polygon points="418.8,261.3 420.8,264.5 423.0,268.5 425.3,272.0 427.0,269.3 429.2,266.0 431.3,263.6 435.5,262.3 440.1,261.1 446.5,260.0 452.7,259.1 457.0,258.5 461.5,257.9 463.5,252.0 465.7,246.3 467.8,240.8 469.6,239.8 471.5,239.2 476.0,239.2 480.3,239.3 482.8,242.8 485.4,246.6 488.0,249.0 490.4,251.6 494.0,255.8 498.0,260.0 501.7,264.2 503.6,267.3 505.5,270.4 507.0,275.5 508.5,280.5 509.8,284.0 511.0,287.3 515.5,287.0 520.5,286.8 524.3,287.3 526.8,285.0 529.3,283.0 532.5,284.3 535.6,285.5 539.5,286.8 543.1,288.0 545.0,289.5 546.9,291.3 548.1,299.0 549.4,306.9 551.0,315.0 552.6,322.5 556.0,319.0 559.7,315.7 561.4,322.5 563.2,329.5 565.0,335.0 567.0,340.8 568.8,345.5 570.6,349.8 573.0,351.0 580.0,351.4 590.0,351.0 590.0,352.2 418.2,352.2 418.2,261.3" fill="#0e8268"/>
<clipPath id="fp4"><polygon points="418.8,261.3 420.8,264.5 423.0,268.5 425.3,272.0 427.0,269.3 429.2,266.0 431.3,263.6 435.5,262.3 440.1,261.1 446.5,260.0 452.7,259.1 457.0,258.5 461.5,257.9 463.5,252.0 465.7,246.3 467.8,240.8 469.6,239.8 471.5,239.2 476.0,239.2 480.3,239.3 482.8,242.8 485.4,246.6 488.0,249.0 490.4,251.6 494.0,255.8 498.0,260.0 501.7,264.2 503.6,267.3 505.5,270.4 507.0,275.5 508.5,280.5 509.8,284.0 511.0,287.3 515.5,287.0 520.5,286.8 524.3,287.3 526.8,285.0 529.3,283.0 532.5,284.3 535.6,285.5 539.5,286.8 543.1,288.0 545.0,289.5 546.9,291.3 548.1,299.0 549.4,306.9 551.0,315.0 552.6,322.5 556.0,319.0 559.7,315.7 561.4,322.5 563.2,329.5 565.0,335.0 567.0,340.8 568.8,345.5 570.6,349.8 573.0,351.0 580.0,351.4 590.0,351.0 590.0,352.2 418.2,352.2 418.2,261.3"/></clipPath>
<g clip-path="url(#fp4)" stroke="#b4fbe6" stroke-width="1" stroke-dasharray="1 1" shape-rendering="crispEdges">
<line x1="418" x2="590" y1="265.5" y2="265.5"/>
<line x1="418" x2="590" y1="291.5" y2="291.5"/>
<line x1="418" x2="590" y1="318.5" y2="318.5"/>
<line x1="418" x2="590" y1="344.5" y2="344.5"/>
<line x1="461.5" x2="461.5" y1="236" y2="352.2"/>
<line x1="504.5" x2="504.5" y1="236" y2="352.2"/>
<line x1="547.5" x2="547.5" y1="236" y2="352.2"/>
</g>
<polyline points="418.8,261.3 420.8,264.5 423.0,268.5 425.3,272.0 427.0,269.3 429.2,266.0 431.3,263.6 435.5,262.3 440.1,261.1 446.5,260.0 452.7,259.1 457.0,258.5 461.5,257.9 463.5,252.0 465.7,246.3 467.8,240.8 469.6,239.8 471.5,239.2 476.0,239.2 480.3,239.3 482.8,242.8 485.4,246.6 488.0,249.0 490.4,251.6 494.0,255.8 498.0,260.0 501.7,264.2 503.6,267.3 505.5,270.4 507.0,275.5 508.5,280.5 509.8,284.0 511.0,287.3 515.5,287.0 520.5,286.8 524.3,287.3 526.8,285.0 529.3,283.0 532.5,284.3 535.6,285.5 539.5,286.8 543.1,288.0 545.0,289.5 546.9,291.3 548.1,299.0 549.4,306.9 551.0,315.0 552.6,322.5 556.0,319.0 559.7,315.7 561.4,322.5 563.2,329.5 565.0,335.0 567.0,340.8 568.8,345.5 570.6,349.8 573.0,351.0 580.0,351.4 590.0,351.0" fill="none" stroke="#0a0f0c" stroke-width="2.4" stroke-linejoin="round" stroke-linecap="round"/>
</g>
<rect x="418.5" y="236.4" width="171.5" height="115.79999999999998" fill="none" stroke="#1c1c1c" stroke-width="1.1"/>
<g font-family="Liberation Sans, sans-serif" font-size="8.9" fill="#000" stroke="#000" stroke-width="0.2">
<text x="378.1" y="81.9" text-anchor="middle">Value</text>
<text x="236.9" y="93.7" text-anchor="middle">04/07</text>
<text x="295.7" y="93.7" text-anchor="middle">07/07</text>
<text x="354.5" y="93.7" text-anchor="middle">08/07</text>
<text x="403.5" y="108.5" text-anchor="middle">2240</text>
<text x="403.5" y="129.1" text-anchor="middle">2220</text>
<text x="403.5" y="150.0" text-anchor="middle">2200</text>
<text x="403.5" y="170.3" text-anchor="middle">2180</text>
<text x="403.5" y="190.9" text-anchor="middle">2160</text>
<text x="403.5" y="210.8" text-anchor="middle">2140</text>
<text x="558.2" y="82.1" text-anchor="middle">Price –</text>
<text x="430.2" y="93.7" text-anchor="middle">10/07</text>
<text x="461.9" y="93.7" text-anchor="middle">08/10</text>
<text x="504.9" y="93.7" text-anchor="middle">07/01</text>
<text x="546.8" y="93.7" text-anchor="middle">07/04</text>
<text x="577.8" y="93.7" text-anchor="middle">07/07</text>
<text x="605.9" y="115.7" text-anchor="middle">2400</text>
<text x="605.9" y="142.7" text-anchor="middle">2240</text>
<text x="605.9" y="170.5" text-anchor="middle">2080</text>
<text x="605.9" y="197.9" text-anchor="middle">1920</text>
<text x="354.0" y="222.2" text-anchor="middle">Price –</text>
<text x="219.3" y="233.7" text-anchor="middle">10/04</text>
<text x="252.0" y="233.7" text-anchor="middle">02/05</text>
<text x="296.9" y="233.7" text-anchor="middle">24/05</text>
<text x="341.6" y="233.7" text-anchor="middle">15/06</text>
<text x="374.0" y="233.7" text-anchor="middle">07/07</text>
<text x="403.5" y="247.1" text-anchor="middle">2475</text>
<text x="403.5" y="269.7" text-anchor="middle">2376</text>
<text x="403.5" y="294.9" text-anchor="middle">2277</text>
<text x="403.5" y="319.5" text-anchor="middle">2178</text>
<text x="403.5" y="344.9" text-anchor="middle">2079</text>
<text x="558.2" y="222.2" text-anchor="middle">Price –</text>
<text x="429.5" y="233.7" text-anchor="middle">09/06</text>
<text x="461.5" y="233.7" text-anchor="middle">16/06</text>
<text x="504.9" y="233.7" text-anchor="middle">23/06</text>
<text x="546.6" y="233.7" text-anchor="middle">30/06</text>
<text x="577.8" y="233.7" text-anchor="middle">07/07</text>
<text x="605.9" y="246.5" text-anchor="middle">2400</text>
<text x="605.9" y="268.6" text-anchor="middle">2350</text>
<text x="605.9" y="295.0" text-anchor="middle">2300</text>
<text x="605.9" y="321.7" text-anchor="middle">2250</text>
<text x="605.9" y="347.8" text-anchor="middle">2200</text>
</g>
</svg>
</body></html>
